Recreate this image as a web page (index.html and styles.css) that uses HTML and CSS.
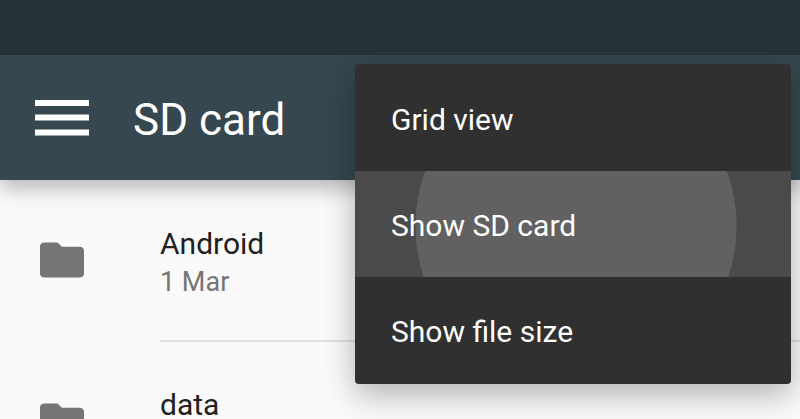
FILE: index.html
```html
<!DOCTYPE html>
<html lang="en">
<head>
<meta charset="utf-8">
<meta name="viewport" content="width=device-width, initial-scale=1">
<title>SD card</title>
<link rel="stylesheet" href="styles.css">
</head>
<body>
<div class="status-bar"></div>
<header class="app-bar">
  <button class="nav-button" type="button" aria-label="Open navigation">
    <svg class="nav-icon" viewBox="0 0 54 36" aria-hidden="true"><path d="M0 0h54v6H0zM0 14.500h54v6H0zM0 29.500h54v6H0z"/></svg>
  </button>
  <h1 class="title">SD card</h1>
  <div class="menu" role="menu">
    <button class="menu-item" type="button" role="menuitem">Grid view</button>
    <button class="menu-item pressed" type="button" role="menuitem">Show SD card</button>
    <button class="menu-item" type="button" role="menuitem">Show file size</button>
  </div>
</header>
<main>
  <ul class="files">
    <li class="file">
      <svg class="folder" viewBox="0 0 20 16" aria-hidden="true"><path d="M8 0H2C.9 0 0 .7 0 1.700V14.300C0 15.300.9 16 2 16h16c1.100 0 2-.7 2-1.700V3.700C20 2.700 19.100 2 18 2h-8z"/></svg>
      <div class="details">
        <span class="name">Android</span>
        <span class="date">1 Mar</span>
      </div>
    </li>
    <li class="file">
      <svg class="folder" viewBox="0 0 20 16" aria-hidden="true"><path d="M8 0H2C.9 0 0 .7 0 1.700V14.300C0 15.300.9 16 2 16h16c1.100 0 2-.7 2-1.700V3.700C20 2.700 19.100 2 18 2h-8z"/></svg>
      <div class="details">
        <span class="name">data</span>
      </div>
    </li>
  </ul>
</main>
</body>
</html>
```
FILE: styles.css
```css
* {
  box-sizing: border-box;
}

body {
  margin: 0;
  min-height: 100vh;
  overflow: hidden;
  background: #fafafa;
  color: #212121;
  font-family: Roboto, sans-serif;
}

button {
  border: 0;
  padding: 0;
  background: none;
  color: inherit;
  font: inherit;
}

.status-bar {
  position: relative;
  z-index: 2;
  height: 55px;
  background: #263238;
}

.app-bar {
  position: relative;
  z-index: 1;
  display: flex;
  align-items: center;
  gap: 44px;
  height: 125px;
  padding: 0 35px;
  background: #37474f;
  color: #fff;
  box-shadow: 0 8px 20px rgba(0, 0, 0, 0.28);
}

.nav-button {
  display: flex;
}

.nav-icon {
  width: 54px;
  height: 36px;
  fill: #fff;
}

.title {
  margin: 0;
  padding-top: 4px;
  font-size: 44px;
  font-weight: 400;
  line-height: 52px;
}

.menu {
  position: absolute;
  top: 9px;
  right: 9px;
  width: 436px;
  padding: 1px 0;
  border-radius: 4px;
  background: #303030;
  box-shadow: 0 10px 32px rgba(0, 0, 0, 0.3);
}

.menu-item {
  display: block;
  width: 100%;
  padding: 38px 36px 34px;
  font-size: 30px;
  line-height: 34px;
  text-align: left;
}

.pressed {
  background: radial-gradient(circle at 221px 55px, #616161 160px, #4a4a4a 161px);
}

.files {
  margin: 0;
  padding: 1px 0 0;
  list-style: none;
}

.file {
  display: flex;
  align-items: center;
  gap: 76px;
  height: 161px;
  padding-left: 40px;
}

.folder {
  flex: none;
  width: 44px;
  height: 36px;
  margin-bottom: 3px;
  fill: #757575;
}

.details {
  display: flex;
  flex: 1;
  flex-direction: column;
  align-self: stretch;
  padding-top: 43px;
  border-bottom: 2px solid #e0e0e0;
}

.name {
  font-size: 30px;
  line-height: 40px;
}

.date {
  color: #757575;
  font-size: 27px;
  line-height: 36px;
}
```
